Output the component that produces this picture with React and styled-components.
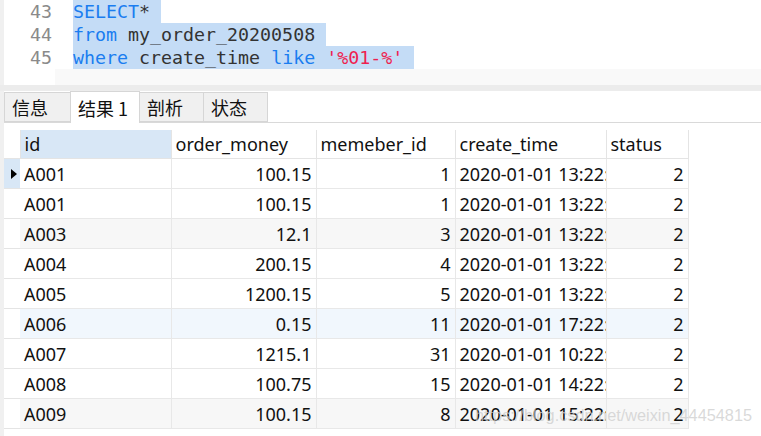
import React from 'react';
import styled, { createGlobalStyle } from 'styled-components';

const GlobalStyle = createGlobalStyle`
  html, body {
    margin: 0;
    padding: 0;
    background: #fff;
  }
`

const Page = styled.div`
  position: relative;
  width: 761px;
  height: 436px;
  overflow: hidden;
  background: #f0f0f0;
  padding-left: 4px;
  box-sizing: border-box;
  display: flex;
  flex-direction: column;
`

const Editor = styled.div`
  height: 85px;
  display: flex;
  background: #fff;
  font-family: "DejaVu Sans Mono", "Liberation Mono", monospace;
  font-size: 18.3px;
`

const Gutter = styled.div`
  width: 48px;
  padding-right: 3px;
  display: flex;
  flex-direction: column;
  align-items: flex-end;
  color: #8a8a8a;
  background: #fff;
`

const CodeArea = styled.div`
  flex: 1;
  display: flex;
  flex-direction: column;
  padding-left: 18px;
  background: linear-gradient(#fff 0, #fff 69px, #f9f9f9 69px);
`

const Line = styled.div`
  height: 23px;
  line-height: 23px;
  white-space: pre;
`

const Selected = styled.span`
  background: #c4dcf6;
  padding-right: 11px;
  display: inline-block;
  height: 23px;
`

const Kw = styled.span`
  color: #1a7df0;
`

const Ident = styled.span`
  color: #333;
`

const Str = styled.span`
  color: #ee1f50;
`

const Separator = styled.div`
  height: 6px;
  background: #ececec;
  margin-left: -4px;
`

const TabBar = styled.div`
  height: 31px;
  display: flex;
  align-items: flex-end;
  background: #fff;
  border-bottom: 1px solid #d9d9d9;
`

const Tab = styled.div`
  box-sizing: border-box;
  width: ${props => props.w}px;
  height: ${props => props.active ? 32 : 30}px;
  margin-bottom: ${props => props.active ? -1 : 0}px;
  border: 1px solid #d6d6d6;
  border-bottom: ${props => props.active ? 'none' : '1px solid #d6d6d6'};
  margin-left: ${props => props.first ? 0 : -1}px;
  background: ${props => props.active ? '#fff' : '#f0f0f0'};
  font-family: "Noto Sans CJK SC", "Noto Sans", sans-serif;
  font-size: 18px;
  color: #111;
  display: flex;
  align-items: center;
  padding-left: 7px;
  position: relative;
  z-index: ${props => props.active ? 1 : 0};
`

const GridArea = styled.div`
  flex: 1;
  background: #fff;
  padding-top: 7px;
`

const Table = styled.table`
  width: 684px;
  border-collapse: collapse;
  table-layout: fixed;
  font-family: "Noto Sans", "Open Sans", sans-serif;
  font-size: 18px;
  color: #111;
`

const HeadCell = styled.th`
  height: 28px;
  padding: 0 4px;
  font-weight: normal;
  text-align: left;
  white-space: nowrap;
  overflow: hidden;
  border-right: 1px solid #e4e4e4;
  border-bottom: 1px solid #e4e4e4;
  background: ${props => props.focus ? '#d8e7f6' : '#fff'};
`

const RowHead = styled.td`
  padding: 0;
  border-bottom: 1px solid #e4e4e4;
  background: ${props => props.current ? '#d8e7f6' : '#fff'};
`

const Pointer = styled.span`
  display: block;
  width: 0;
  height: 0;
  margin-left: 7px;
  border-top: 5px solid transparent;
  border-bottom: 5px solid transparent;
  border-left: 6px solid #000;
`

const Row = styled.tr`
  background: ${props => props.tone === 'gray' ? '#f7f7f7' : props.tone === 'hover' ? '#f1f7fd' : '#fff'};
`

const Cell = styled.td`
  height: 29px;
  padding: 0 4px;
  white-space: nowrap;
  overflow: hidden;
  text-overflow: clip;
  text-align: ${props => props.num ? 'right' : 'left'};
  border-right: 1px solid #e8e8e8;
  border-bottom: 1px solid #e8e8e8;
`

const Watermark = styled.div`
  position: absolute;
  right: 9px;
  bottom: 11px;
  font-family: "Liberation Sans", Arial, sans-serif;
  font-size: 16.3px;
  color: rgba(205, 205, 205, 0.75);
  pointer-events: none;
`

const columns = [
  { key: 'id', label: 'id', w: 151 },
  { key: 'money', label: 'order_money', w: 145, num: true },
  { key: 'member', label: 'memeber_id', w: 139, num: true },
  { key: 'time', label: 'create_time', w: 151 },
  { key: 'status', label: 'status', w: 82, num: true },
]

const rows = [
  { id: 'A001', money: '100.15', member: '1', time: '2020-01-01 13:22:00', status: '2' },
  { id: 'A001', money: '100.15', member: '1', time: '2020-01-01 13:22:00', status: '2' },
  { id: 'A003', money: '12.1', member: '3', time: '2020-01-01 13:22:00', status: '2', tone: 'gray' },
  { id: 'A004', money: '200.15', member: '4', time: '2020-01-01 13:22:00', status: '2' },
  { id: 'A005', money: '1200.15', member: '5', time: '2020-01-01 13:22:00', status: '2' },
  { id: 'A006', money: '0.15', member: '11', time: '2020-01-01 17:22:00', status: '2', tone: 'hover' },
  { id: 'A007', money: '1215.1', member: '31', time: '2020-01-01 10:22:00', status: '2' },
  { id: 'A008', money: '100.75', member: '15', time: '2020-01-01 14:22:00', status: '2' },
  { id: 'A009', money: '100.15', member: '8', time: '2020-01-01 15:22:00', status: '2', tone: 'gray' },
]

const tabs = [
  { label: '信息', w: 67 },
  { label: '结果 1', w: 70, active: true },
  { label: '剖析', w: 65 },
  { label: '状态', w: 65 },
]

const App = () => {
  return (
    <Page>
      <GlobalStyle />
      <Editor>
        <Gutter>
          <Line>43</Line>
          <Line>44</Line>
          <Line>45</Line>
        </Gutter>
        <CodeArea>
          <Line><Selected><Kw>SELECT</Kw><Ident>*</Ident></Selected></Line>
          <Line><Selected><Kw>from</Kw><Ident> my_order_20200508</Ident></Selected></Line>
          <Line><Selected><Kw>where</Kw><Ident> create_time </Ident><Kw>like</Kw> <Str>'%01-%'</Str></Selected></Line>
        </CodeArea>
      </Editor>
      <Separator />
      <TabBar>
        {tabs.map((t, i) => (
          <Tab key={t.label} w={t.w} active={t.active} first={i === 0}>{t.label}</Tab>
        ))}
      </TabBar>
      <GridArea>
        <Table>
          <colgroup>
            <col style={{ width: 16 }} />
            {columns.map(c => <col key={c.key} style={{ width: c.w }} />)}
          </colgroup>
          <thead>
            <tr>
              <HeadCell as="td" style={{ padding: 0 }} />
              {columns.map((c, i) => (
                <HeadCell key={c.key} focus={i === 0}>{c.label}</HeadCell>
              ))}
            </tr>
          </thead>
          <tbody>
            {rows.map((r, i) => (
              <Row key={i} tone={r.tone}>
                <RowHead current={i === 0}>{i === 0 && <Pointer />}</RowHead>
                {columns.map(c => (
                  <Cell key={c.key} num={c.num}>{r[c.key]}</Cell>
                ))}
              </Row>
            ))}
          </tbody>
        </Table>
      </GridArea>
      <Watermark>https://blog.csdn.net/weixin_44454815</Watermark>
    </Page>
  )
}

export default App;
